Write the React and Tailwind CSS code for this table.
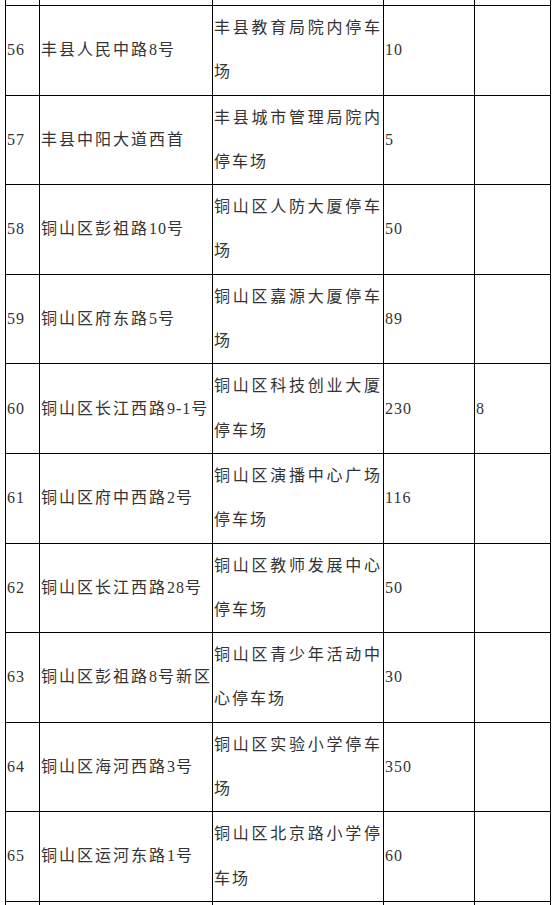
import React from 'react';

const rows = [
  { no: '56', addr: '丰县人民中路8号', name: '丰县教育局院内停车场', count: '10', extra: '' },
  { no: '57', addr: '丰县中阳大道西首', name: '丰县城市管理局院内停车场', count: '5', extra: '' },
  { no: '58', addr: '铜山区彭祖路10号', name: '铜山区人防大厦停车场', count: '50', extra: '' },
  { no: '59', addr: '铜山区府东路5号', name: '铜山区嘉源大厦停车场', count: '89', extra: '' },
  { no: '60', addr: '铜山区长江西路9-1号', name: '铜山区科技创业大厦停车场', count: '230', extra: '8' },
  { no: '61', addr: '铜山区府中西路2号', name: '铜山区演播中心广场停车场', count: '116', extra: '' },
  { no: '62', addr: '铜山区长江西路28号', name: '铜山区教师发展中心停车场', count: '50', extra: '' },
  { no: '63', addr: '铜山区彭祖路8号新区', name: '铜山区青少年活动中心停车场', count: '30', extra: '' },
  { no: '64', addr: '铜山区海河西路3号', name: '铜山区实验小学停车场', count: '350', extra: '' },
  { no: '65', addr: '铜山区运河东路1号', name: '铜山区北京路小学停车场', count: '60', extra: '' },
];

const cols = 'grid grid-cols-[34px_173px_171px_91px_76px]';
const cell = 'border-r border-b border-black flex items-center pl-[1px] overflow-visible';

// digits sit tighter than the chinese characters
function Txt({ value }) {
  const parts = value.split(/([0-9-]+)/).filter(Boolean);
  return parts.map((p, i) =>
    /^[0-9-]+$/.test(p) ? (
      <span key={i} className="tracking-[1px]">{p}</span>
    ) : (
      <React.Fragment key={i}>{p}</React.Fragment>
    )
  );
}

function StubRow({ height, bottom }) {
  return (
    <div className={`${cols} ${height}`}>
      {[0, 1, 2, 3, 4].map((i) => (
        <div key={i} className={`border-r border-black ${bottom ? 'border-b' : ''}`} />
      ))}
    </div>
  );
}

export default function App() {
  return (
    <div className="w-[556px] h-[905px] overflow-hidden bg-white">
      <div className="ml-[5px] w-[546px] border-l border-black text-[16px] tracking-[2px] leading-[44.3px] text-[#333] font-['Liberation_Serif','Noto_Sans_CJK_SC',serif]">
        <StubRow height="h-[6px]" bottom />
        {rows.map((r) => (
          <div key={r.no} className={`${cols} h-[89.6px]`}>
            <div className={cell}><Txt value={r.no} /></div>
            <div className={`${cell} whitespace-nowrap`}><Txt value={r.addr} /></div>
            <div className={`${cell} pr-[1px]`}>
              <span className="block w-full text-justify"><Txt value={r.name} /></span>
            </div>
            <div className={cell}><Txt value={r.count} /></div>
            <div className={cell}><Txt value={r.extra} /></div>
          </div>
        ))}
        <StubRow height="h-[10px]" />
      </div>
    </div>
  );
}
